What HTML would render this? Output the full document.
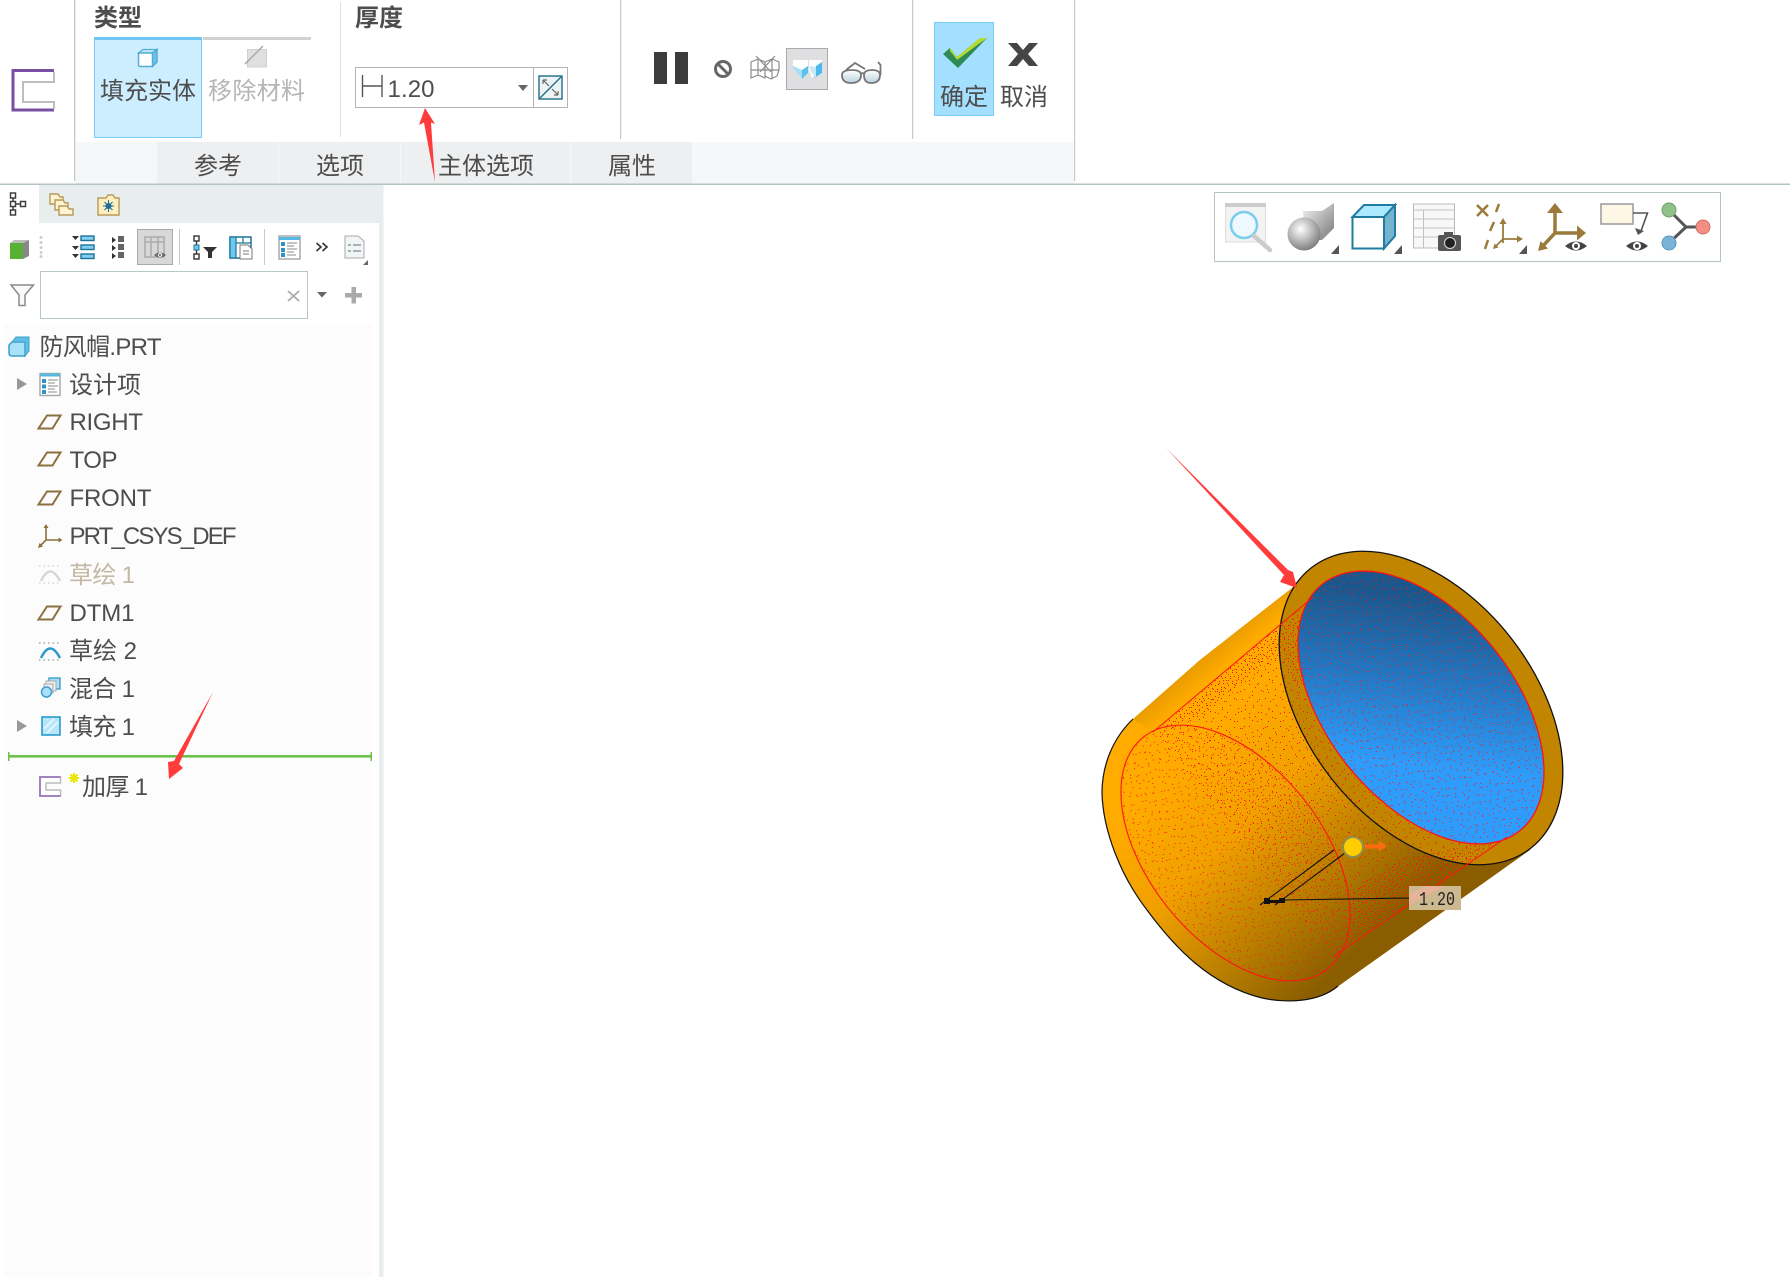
<!DOCTYPE html>
<html lang="zh"><head><meta charset="utf-8"><title>加厚</title>
<style>
html,body{margin:0;padding:0;background:#fff;width:1790px;height:1277px;overflow:hidden}
svg{display:block}
text{font-family:"Liberation Sans","Noto Sans CJK SC",sans-serif;font-size:24px;fill:#4d4d4d}
.b{font-weight:bold}
.m{text-anchor:middle}
.g{fill:#b5b5b5}
</style></head><body>
<svg xmlns="http://www.w3.org/2000/svg" width="1790" height="1277" viewBox="0 0 1790 1277">
<defs>
<linearGradient id="body" gradientUnits="userSpaceOnUse" x1="1150" y1="790" x2="1330" y2="975">
<stop offset="0" stop-color="#ffab00"/><stop offset=".35" stop-color="#f0a000"/><stop offset=".72" stop-color="#b67d00"/><stop offset="1" stop-color="#8a5e00"/></linearGradient>
<linearGradient id="top" gradientUnits="userSpaceOnUse" x1="1200" y1="660" x2="1214" y2="676">
<stop offset="0" stop-color="#e89c00"/><stop offset="1" stop-color="#ffab00"/></linearGradient>
<linearGradient id="blue" gradientUnits="userSpaceOnUse" x1="1345" y1="625" x2="1465" y2="745">
<stop offset="0" stop-color="#1a578c"/><stop offset=".5" stop-color="#2378c4"/><stop offset="1" stop-color="#2e9cfa"/></linearGradient>
<linearGradient id="sh" x1="0" y1="0" x2="1" y2="1"><stop offset="0" stop-color="#f5f5f5"/><stop offset="1" stop-color="#777"/></linearGradient>
<linearGradient id="lens" x1="0" y1="0" x2="0" y2="1"><stop offset="0" stop-color="#fff"/><stop offset="1" stop-color="#b9d4e0"/></linearGradient>
<radialGradient id="ball" cx=".4" cy=".35" r=".7"><stop offset="0" stop-color="#fff"/><stop offset="1" stop-color="#777"/></radialGradient>
<pattern id="sp" width="31" height="29" patternUnits="userSpaceOnUse">
<path shape-rendering="crispEdges" fill="#ff1414" d="M2 3h1v1h-1zM9 1h1v1h-1zM17 5h1v1h-1zM25 2h1v1h-1zM5 9h1v1h-1zM13 11h1v1h-1zM21 9h1v1h-1zM29 12h1v1h-1zM1 15h1v1h-1zM9 17h1v1h-1zM18 16h1v1h-1zM26 18h1v1h-1zM4 22h1v1h-1zM12 24h1v1h-1zM21 23h1v1h-1zM28 25h1v1h-1zM15 20h1v1h-1z"/></pattern>
<pattern id="sq" width="23" height="37" patternUnits="userSpaceOnUse">
<path shape-rendering="crispEdges" fill="#ff1414" d="M3 6h1v1h-1zM11 2h1v1h-1zM19 9h1v1h-1zM7 14h1v1h-1zM15 18h1v1h-1zM2 23h1v1h-1zM21 25h1v1h-1zM10 29h1v1h-1zM17 33h1v1h-1zM5 35h1v1h-1z"/></pattern>
<pattern id="dn" width="13" height="11" patternUnits="userSpaceOnUse">
<path shape-rendering="crispEdges" fill="#ff1010" d="M1 1h1v1h-1zM6 3h1v1h-1zM10 1h1v1h-1zM3 6h1v1h-1zM8 7h1v1h-1zM12 5h1v1h-1zM1 9h1v1h-1zM6 9h1v1h-1zM10 10h1v1h-1z"/></pattern>
<g id="pl"><path d="M38.500 6.500L47 -6.500H60.500L52.500 6.500Z" fill="none" stroke="#8d7040" stroke-width="2"/></g>
<g id="eye"><path d="M-11 0Q0 -9 11 0Q0 9 -11 0Z" fill="#444"/><circle r="4" fill="#fff"/><circle r="2" fill="#444"/></g>
<g id="tri"><path d="M-4 5L4 5L4 -4Z" fill="#555"/></g>
</defs>

<rect width="1790" height="1277" fill="#fff"/>

<!-- ribbon -->
<rect x="76" y="142" width="998" height="42" fill="#f6f7f8"/>
<rect x="157" y="142" width="121" height="42" fill="#eeeff1"/>
<rect x="279" y="142" width="121" height="42" fill="#eeeff1"/>
<rect x="401" y="142" width="169" height="42" fill="#eeeff1"/>
<rect x="571" y="142" width="121" height="42" fill="#eeeff1"/>
<rect x="74" y="0" width="1.400" height="181" fill="#c3cbcb"/>
<rect x="340" y="2" width="1" height="135" fill="#dde0e0"/>
<rect x="620" y="0" width="1.200" height="139" fill="#c6cccc"/>
<rect x="912" y="0" width="1.200" height="139" fill="#c6cccc"/>
<rect x="1074" y="0" width="1.200" height="181" fill="#c6cccc"/>
<rect x="0" y="183.500" width="1790" height="1.500" fill="#b4c3c3"/>

<!-- left thicken icon -->
<path d="M54 70.500H13V110H54" fill="none" stroke="#7a4fa3" stroke-width="3"/>
<path d="M54 72V82H23V102H54V109" fill="none" stroke="#bdbdbd" stroke-width="2"/>

<text x="94" y="26" class="b" textLength="48">类型</text>
<text x="355" y="26" class="b" textLength="48">厚度</text>

<!-- type buttons -->
<rect x="94.500" y="38.500" width="107" height="99" fill="#cdeeff" stroke="#7ccdf5"/>
<rect x="94" y="37" width="108" height="3" fill="#6ec7f2"/>
<rect x="203" y="37" width="108" height="3" fill="#d2d2d2"/>
<path d="M138.500 53L143 49.500H157L152.500 53Z" fill="#bfe8f8" stroke="#55add6" stroke-width="1.300"/>
<path d="M152.500 53L157 49.500V62L152.500 66.500Z" fill="#6cc3e8" stroke="#4aa5cf" stroke-width="1.300"/>
<rect x="138.500" y="53" width="14" height="13.500" rx="1.500" fill="#fff" stroke="#55add6" stroke-width="1.500"/>
<rect x="247.500" y="49.500" width="19" height="17.500" fill="#e0e0e0" stroke="#d0d0d0"/>
<path d="M245 64L263 46" stroke="#a8a8a8" stroke-width="1.500"/>
<text x="100" y="99" textLength="96">填充实体</text>
<text x="208" y="99" class="g" textLength="97">移除材料</text>

<!-- thickness input -->
<rect x="355.500" y="67.500" width="212" height="40" fill="#fff" stroke="#b5b5b5"/>
<path d="M533.500 67V108" stroke="#b5b5b5"/>
<path d="M362.500 75V97M382 75V97M363 86H382" stroke="#555" stroke-width="1.400" fill="none"/>
<text x="387.500" y="97" textLength="47">1.20</text>
<path d="M518 85H528L523 91Z" fill="#666"/>
<rect x="539" y="76" width="23" height="23" fill="#eef3f5" stroke="#1d6d88" stroke-width="1.400"/>
<path d="M540 98L561 77" stroke="#1d6d88" stroke-width="1.300"/>
<path d="M543 80L549 86M543 80h4M543 80v4M558 95L552 89M558 95h-4M558 95v-4" stroke="#666" stroke-width="1.200" fill="none"/>

<text x="218" y="174" class="m" textLength="48">参考</text>
<text x="340" y="174" class="m" textLength="48">选项</text>
<text x="486" y="174" class="m" textLength="96">主体选项</text>
<text x="632" y="174" class="m" textLength="48">属性</text>

<!-- display controls -->
<rect x="654" y="52" width="13" height="32" fill="#3c3c3c"/>
<rect x="675" y="52" width="13" height="32" fill="#3c3c3c"/>
<circle cx="723" cy="69" r="7.500" fill="none" stroke="#666" stroke-width="3"/>
<path d="M718 64L728 74" stroke="#666" stroke-width="3"/>
<g fill="none" stroke="#8c8c8c" stroke-width="1.200"><path d="M751 62L758 59L765 62V78L758 75L751 78ZM751 70L765 70M765 62L772 59L779 62V70L777 76L771 79L765 76M772 59V79M765 70H779M756 56L771 72M775 56L760 72M758 59V75"/></g>
<rect x="786.500" y="48.500" width="41" height="41" fill="#dfdfe1" stroke="#aaa"/>
<path d="M793 60H808V73L802 79L793 68Z" fill="#fff"/>
<path d="M793 66L802 70V79L793 68Z" fill="#a5def5"/>
<path d="M802 70L808 66V73L802 79Z" fill="#5cc0ec"/>
<path d="M809 60H822V73L812 78L809 70Z" fill="#fff"/>
<path d="M816 66L822 62V73L814 78Z" fill="#4fb8ea"/>
<path d="M809 66L816 67V78L811 72Z" fill="#c5eaf8"/>
<g fill="url(#lens)" stroke="#777" stroke-width="1.800"><path d="M842 75Q842 70 852 70Q861 70 861 75Q861 83 851 83Q842 83 842 75Z"/><path d="M864 75Q864 70 872 70Q880 70 880 75Q880 83 871 83Q864 83 864 75Z"/></g>
<path d="M861 74Q862.500 72 864 74M846 70L855 63L865 69M878 62L880.500 65V75" fill="none" stroke="#777" stroke-width="1.800"/>

<!-- OK / Cancel -->
<rect x="934.500" y="22.500" width="59" height="93" fill="#a3dfff" stroke="#7ccdf5"/>
<path d="M943 54L950 48L957 57L980 38H987L958 68Z" fill="#2e8b57"/>
<path d="M950 48L957 57L980 38H987L958 61L950 51Z" fill="#b6dc2f"/>
<path d="M951 52L957 60L984 40L958 66Z" fill="#2e8b57"/>
<text x="940" y="105" textLength="48">确定</text>
<path d="M1008 43H1017L1023 50L1029 43H1038L1028 54L1038 66H1029L1023 59L1017 66H1008L1018 54Z" fill="#454545"/>
<text x="1000" y="105" textLength="48">取消</text>

<!-- left panel -->
<rect x="39" y="185" width="340" height="38" fill="#e8eded"/>
<rect x="379" y="185" width="4.500" height="1092" fill="#e8eded"/>
<rect x="4" y="325" width="368" height="952" fill="#fcfcfd"/>

<!-- tab icons -->
<g fill="none" stroke="#3f3f3f" stroke-width="1.500"><rect x="10.500" y="193" width="5" height="5"/><rect x="10.500" y="201.500" width="5" height="5"/><rect x="10.500" y="210" width="5" height="5"/><rect x="20.500" y="201.500" width="5" height="5"/><path d="M13 198V201M13 206.500V210M15.500 204H20.500"/></g>
<g fill="#fff3d0" stroke="#b89a5a" stroke-width="1.400"><path d="M50 194H58L60 197H63V204H50Z"/><path d="M55 200H63L65 203H68V210H55Z"/><path d="M59 206H67L69 209H73V215H59Z"/></g>
<path d="M98 198H106L108 195H113L115 198H119V215H98Z" fill="#ffefc0" stroke="#b89a5a" stroke-width="1.400"/>
<circle cx="108.500" cy="206" r="3" fill="#1e6d96"/><path d="M103 206H114M108.500 200V212M104.500 202L112.500 210M112.500 202L104.500 210" stroke="#1e6d96"/>

<!-- tree toolbar -->
<path d="M10 243H23V259H10Z" fill="#57b135"/><path d="M10 243L14 240H29L23 243Z" fill="#bbb"/><path d="M23 243L29 240V256L23 259Z" fill="#888"/>
<g fill="#ccc"><circle cx="41" cy="237.500" r="1.500"/><circle cx="41" cy="242.500" r="1.500"/><circle cx="41" cy="247.500" r="1.500"/><circle cx="41" cy="252.500" r="1.500"/><circle cx="41" cy="256.500" r="1.500"/></g>
<g><path d="M72 236H79L75.500 240ZM72 246H79L75.500 250ZM72 254H79L75.500 258Z" fill="#333"/><g fill="#7fd0f2" stroke="#1d7396" stroke-width="1.400"><rect x="81" y="236" width="13" height="4.500"/><rect x="81" y="245" width="13" height="4.500"/><rect x="81" y="254" width="13" height="4.500"/></g></g>
<g><path d="M112 237L116 240L112 243ZM112 245L116 248L112 251ZM112 253L116 256L112 259Z" fill="#333"/><g fill="#666"><rect x="118" y="236" width="6" height="6"/><rect x="118" y="244" width="6" height="6"/><rect x="118" y="252" width="6" height="6"/></g></g>
<rect x="137.500" y="229.500" width="35" height="35" fill="#d8d8d8" stroke="#aaa"/>
<g fill="none" stroke="#aaa" stroke-width="1.500"><rect x="145" y="237" width="19" height="20"/><path d="M151 237V257M158 237V257M145 242H164"/></g>
<g opacity=".7"><use href="#eye" transform="translate(160,255) scale(.55)"/></g>
<rect x="179" y="229" width="1" height="36" fill="#c5cbcb"/>
<g fill="none" stroke="#333" stroke-width="1.400"><rect x="194" y="236" width="5" height="5"/><rect x="194" y="254" width="5" height="5"/><path d="M196.500 241V245M196.500 250V254"/></g><rect x="194" y="245" width="5" height="5" fill="#6cc9ef" stroke="#1d7396"/>
<path d="M203 247H217L212 252V258H208V252Z" fill="#333"/>
<rect x="230" y="237" width="21" height="21" fill="#fff" stroke="#1d7396" stroke-width="1.500"/><rect x="230" y="237" width="6" height="21" fill="#6cc9ef" stroke="#1d7396" stroke-width="1.200"/><path d="M236 243H251M243 237V243" stroke="#1d7396" stroke-width="1.200"/>
<path d="M240 245H248L252 249V259H240Z" fill="#fff" stroke="#777"/><path d="M243 251H249M243 254H249" stroke="#777"/>
<rect x="264" y="229" width="1" height="36" fill="#c5cbcb"/>
<rect x="279" y="236" width="21" height="23" fill="#fff" stroke="#aaa" stroke-width="1.500"/><path d="M279 237H300V240H279Z" fill="#56b9e3"/>
<g fill="#2f94c5"><rect x="281" y="242" width="4" height="4"/><rect x="281" y="248" width="4" height="4"/><rect x="281" y="253" width="4" height="4"/></g><path d="M287 243H297M287 246H294M287 249H297M287 252H294M287 255H296" stroke="#888"/>
<path d="M316.500 243L321 247L316.500 251M322.500 243L327 247L322.500 251" fill="none" stroke="#333" stroke-width="1.600"/>
<path d="M345 236H358L364 241V258H345Z" fill="#f0f5f8" stroke="#aaa"/><path d="M348 245H351M353 245H361M348 251H351M353 251H361" stroke="#888" stroke-width="1.200"/>
<path d="M368 260V265H363Z" fill="#666"/>

<!-- filter -->
<path d="M11 285H33.500L25 295V305.500H19V295Z" fill="#fafafa" stroke="#8a8a8a" stroke-width="1.500"/>
<rect x="40.500" y="271.500" width="267" height="47" fill="#fff" stroke="#b7c7c7"/>
<path d="M288 291L299 301M299 291L288 301" stroke="#aaa" stroke-width="1.800"/>
<path d="M317 292H327L322 297.500Z" fill="#666"/>
<path d="M351.500 287H356V293H362V297.500H356V303.500H351.500V297.500H345V293H351.500Z" fill="#aaa"/>

<!-- tree rows -->
<path d="M12 342H25V356H12Q9 356 9 353V345Z" fill="#a9e1fa" stroke="#3d9fca" stroke-width="1.500"/><path d="M12 342L16 337H29V351L25 356V342Z" fill="#5dbfe8" stroke="#3d9fca"/>
<text x="39.500" y="355" textLength="122">防风帽.PRT</text>

<path d="M17 378L27 384L17 390Z" fill="#999"/>
<rect x="40" y="373.500" width="20" height="22" fill="#fff" stroke="#aaa" stroke-width="1.500"/><rect x="40" y="373.500" width="20" height="3" fill="#56b9e3"/>
<g fill="#2f94c5"><rect x="42" y="379" width="4" height="4"/><rect x="42" y="384.500" width="4" height="4"/><rect x="42" y="390" width="4" height="4"/></g><path d="M48 380H58M48 383H55M48 386H58M48 389H55M48 392H57" stroke="#888"/>
<text x="69" y="393" textLength="72">设计项</text>

<use href="#pl" y="422"/><text x="69.500" y="430" textLength="73.500">RIGHT</text>
<use href="#pl" y="459"/><text x="69.500" y="468" textLength="48">TOP</text>
<use href="#pl" y="498"/><text x="69.500" y="506" textLength="82">FRONT</text>
<path d="M46 527V540H60M46 540L39.500 546.500" fill="none" stroke="#8d7040" stroke-width="1.600"/>
<path d="M46 524l-2.500 4h5zM62.500 540l-4 -2.500v5zM38 548l1.500 -5l3.500 3.500z" fill="#8d7040"/>
<text x="69.500" y="544" textLength="167">PRT_CSYS_DEF</text>

<g stroke="#d6d6d6" fill="none"><path d="M39 566H61M39 583H61" stroke-width="1.500" stroke-dasharray="1.500 3"/><path d="M41 581Q50 562 60 581" stroke-width="2.500"/></g>
<text x="69" y="583" style="fill:#c2b8a3" textLength="66">草绘 1</text>

<use href="#pl" y="613"/><text x="69.500" y="621" textLength="65">DTM1</text>

<g fill="none"><path d="M39 643H61M39 660H61" stroke="#aaa" stroke-width="1.500" stroke-dasharray="1.500 3"/><path d="M41 658Q50 639 60 658" stroke="#2a9bcb" stroke-width="2.500"/></g>
<text x="69" y="659" textLength="68">草绘 2</text>

<rect x="49" y="678" width="11" height="11" fill="#a9e1fa" stroke="#3d9fca" stroke-width="1.400"/><rect x="46" y="681" width="10" height="10" fill="#eee" stroke="#aaa"/><rect x="44" y="684" width="9" height="9" fill="#eee" stroke="#aaa"/><circle cx="46.500" cy="692" r="5" fill="#a9e1fa" stroke="#3d9fca" stroke-width="1.500"/>
<text x="69" y="697" textLength="66">混合 1</text>

<path d="M17 720L27 726L17 732Z" fill="#999"/>
<rect x="42" y="717" width="18" height="18" fill="#b7e6fa" stroke="#2a9bcb" stroke-width="1.600"/><path d="M44 729L54 719M47 733L58 722" stroke="#e8f8ff" stroke-width="1.600"/>
<text x="69" y="735" textLength="66">填充 1</text>

<rect x="8" y="755" width="364" height="2.600" fill="#6cc24a"/><rect x="8" y="752" width="1.500" height="9" fill="#6cc24a"/><rect x="370.500" y="752" width="1.500" height="9" fill="#6cc24a"/>

<path d="M60.500 777H40V796H60.500V790H46V783H60.500Z" fill="#fff" stroke="#bbb" stroke-width="1.500"/>
<path d="M60.500 777H40V796H60.500" fill="none" stroke="#9a78b8" stroke-width="1.800"/>
<path d="M74 773V783M69 778H79M70.500 774.500L77.500 781.500M77.500 774.500L70.500 781.500" stroke="#e8e800" stroke-width="2"/>
<text x="82" y="795" textLength="66">加厚 1</text>

<!-- view toolbar -->
<rect x="1214.500" y="192.500" width="506" height="69" fill="#fff" stroke="#b4c3c3"/>
<rect x="1225.500" y="204" width="40" height="38" fill="#f3f3f3" stroke="#ddd"/><rect x="1225" y="203" width="41" height="4" fill="#ccc"/>
<circle cx="1244" cy="225" r="13" fill="#eef9ff" stroke="#7bcdee" stroke-width="2.500"/><path d="M1254 236L1270 250" stroke="#ccc" stroke-width="4.500" stroke-linecap="round"/>
<path d="M1303 211L1322 211L1334 203V228L1322 240H1305Z" fill="url(#sh)"/><circle cx="1304" cy="234" r="16.500" fill="url(#ball)"/>
<use href="#tri" transform="translate(1335,249)"/>
<path d="M1352.500 217H1384V248.500H1352.500Z" fill="#fff" stroke="#1f7ba0" stroke-width="2"/><path d="M1352.500 217L1364 205H1395L1384 217Z" fill="#aeeaff" stroke="#1f7ba0" stroke-width="2"/><path d="M1384 217L1395 205V236L1384 248.500Z" fill="#74b4cf" stroke="#1f7ba0" stroke-width="2"/>
<use href="#tri" transform="translate(1398,249)"/>
<rect x="1413.500" y="204" width="41" height="44" fill="#f8f8f8" stroke="#bbb"/><path d="M1413.500 210H1454.500M1413 219H1454M1413 228H1454M1413 237H1454M1423.500 210V248" stroke="#c2c2c2"/>
<rect x="1438" y="235" width="23" height="16" rx="2" fill="#555"/><rect x="1444" y="232" width="9" height="4" fill="#555"/><circle cx="1450" cy="243" r="5.500" fill="#222" stroke="#ddd"/>
<g stroke="#9a7b3c" stroke-width="2.500" fill="none"><path d="M1477 205L1488 216M1488 205L1477 216M1499 204L1496 212M1494 222L1490 231M1488 240L1485 249"/></g>
<path d="M1503 243V223M1503 239H1519M1503 239L1495 247" stroke="#9a7b3c" stroke-width="1.800" fill="none"/>
<path d="M1503 218l-3.500 6h7zM1523 239l-6 -3.500v7zM1493 249l1.500 -5.500l4 4z" fill="#9a7b3c"/>
<use href="#tri" transform="translate(1523,249)"/>
<path d="M1555 233V212M1555 233H1578M1555 233L1541 248" stroke="#9a7b3c" stroke-width="3.500" fill="none"/>
<path d="M1555 203L1547 213H1563ZM1586 233L1577 225.500V240.500ZM1538 251L1540.500 241L1548 248.500Z" fill="#9a7b3c"/>
<use href="#eye" transform="translate(1576,246)"/>
<rect x="1601" y="204" width="32" height="20" fill="#fff7e6" stroke="#999" stroke-width="1.500"/><path d="M1633 213H1647.500L1641 231" fill="none" stroke="#555" stroke-width="1.600"/><path d="M1635 228L1644 231L1638 235Z" fill="#555"/>
<use href="#eye" transform="translate(1637,246)"/>
<path d="M1669 210L1686 227H1703M1686 227L1669 243" stroke="#555" stroke-width="3" fill="none"/>
<circle cx="1669" cy="210" r="7" fill="#8fc18a" stroke="#6d9e68"/><circle cx="1703" cy="227" r="7" fill="#f28f84" stroke="#cf6e64"/><circle cx="1669" cy="243" r="7" fill="#79b4d8" stroke="#5c96ba"/>

<!-- 3D model -->
<path d="M1297 584L1200 660L1133 719C1113 738 1102 765 1102 793C1103 830 1120 875 1147 910C1175 948 1210 985 1262 998C1285 1003 1318 1003 1340 985L1530 850L1450 700Z" fill="url(#body)"/>
<path d="M1297 584L1200 660L1133 719L1153 732L1313 597Z" fill="url(#top)"/>
<path d="M1133 719C1113 738 1102 765 1102 793C1103 830 1120 875 1147 910C1175 948 1210 985 1262 998C1285 1003 1318 1003 1338 986" fill="none" stroke="#111" stroke-width="1.200"/>

<ellipse cx="1421" cy="708" rx="178" ry="114" transform="rotate(51.900 1421 708)" fill="#c28500"/>

<!-- stipple on body -->
<g id="hullDots">
<path d="M1153 732L1313 597L1507 837L1333 957Z" fill="url(#sp)"/>
<path d="M1153 732L1313 597L1507 837L1333 957Z" fill="url(#sq)"/>
<ellipse cx="1235.500" cy="853" rx="148" ry="87" transform="rotate(51.500 1235.500 853)" fill="url(#sp)"/>
<ellipse cx="1235.500" cy="853" rx="148" ry="87" transform="rotate(51.500 1235.500 853)" fill="url(#sq)"/>
</g>
<path d="M1157 730L1313 597L1297 640L1204 716Z" fill="url(#dn)"/>
<path d="M1333 957L1507 837L1465 845L1400 860L1352 890L1350 935Z" fill="url(#dn)"/>
<path d="M1280 650L1310 600L1308 640L1300 700Z" fill="url(#dn)"/>

<ellipse cx="1421" cy="708" rx="178" ry="114" transform="rotate(51.900 1421 708)" fill="none" stroke="#111" stroke-width="1.300"/>
<ellipse cx="1421" cy="707.500" rx="158" ry="93.700" transform="rotate(51.200 1421 707.500)" fill="url(#blue)"/>
<ellipse cx="1421" cy="707.500" rx="158" ry="93.700" transform="rotate(51.200 1421 707.500)" fill="url(#sp)"/>
<ellipse cx="1421" cy="707.500" rx="158" ry="93.700" transform="rotate(51.200 1421 707.500)" fill="url(#sq)"/>
<ellipse cx="1421" cy="707.500" rx="158" ry="93.700" transform="rotate(51.200 1421 707.500)" fill="none" stroke="#ff1414" stroke-width="1.300"/>
<ellipse cx="1235.500" cy="853" rx="148" ry="87" transform="rotate(51.500 1235.500 853)" fill="none" stroke="#ff1414" stroke-width="1.100"/>
<path d="M1153 732L1313 597M1333 957L1507 837" stroke="#ff1414" stroke-width="1" fill="none"/>

<!-- dimension -->
<path d="M1260 905L1334 850M1275 905L1349 850M1285 900L1410 898" stroke="#111" stroke-width="1.100" fill="none"/>
<path d="M1264 898H1270V904H1264ZM1270 900H1279V903H1270ZM1279 898H1285V903H1279Z" fill="#111"/>
<rect x="1409" y="886" width="52" height="24" fill="#cdb98f"/>
<path d="M1409 905L1445 886H1425L1409 895Z" fill="#f5b0a0" opacity=".6"/>
<text x="1419" y="905" style="font-family:'Liberation Mono',monospace;font-size:19px;fill:#222" textLength="36" lengthAdjust="spacingAndGlyphs">1.20</text>
<circle cx="1353" cy="847" r="10" fill="#ffcc00" stroke="#8f8f50" stroke-width="2"/>
<path d="M1365 844.500H1379V840.500L1387 846L1379 851.500V848.500H1365Z" fill="#ff6a13"/>

<!-- red annotation arrows -->
<path d="M1166 448L1288 570L1293 572L1297 588L1280 582L1284 575Z" fill="#ff3b3b"/>
<path d="M425 108L435 124L431 122.500L435 182L424 122.500L419 125Z" fill="#ff3b3b"/>
<path d="M213 692L179 764L183 768L169 779L168 762L174 761Z" fill="#ff3b3b"/>
</svg>
</body></html>
